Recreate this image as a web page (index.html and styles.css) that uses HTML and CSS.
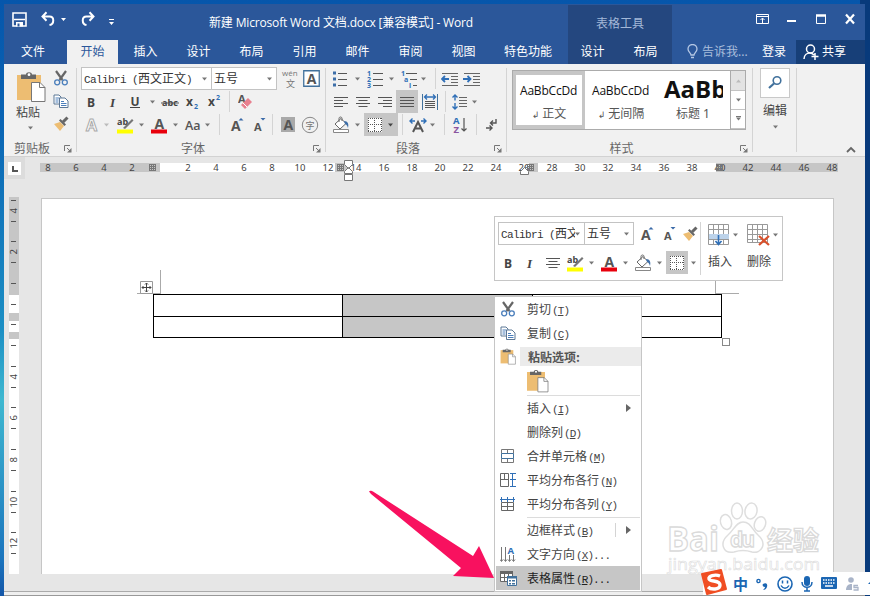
FILE: index.html
```html
<!DOCTYPE html>
<html lang="zh-CN">
<head>
<meta charset="utf-8">
<title>Word</title>
<link rel="stylesheet" href="styles.css">
</head>
<body>
<svg class="defs" width="0" height="0">
  <symbol id="dd" viewBox="0 0 5 4"><path d="M0 .5h5L2.5 3.5z" fill="currentColor"/></symbol>
  <symbol id="cut" viewBox="0 0 16 16"><path d="M3 1l6.500 9M13 1L6.500 10" stroke="#666" stroke-width="2.200" fill="none"/><circle cx="4.200" cy="12.300" r="2.500" fill="none" stroke="#4a7ebb" stroke-width="1.300"/><circle cx="11.800" cy="12.300" r="2.500" fill="none" stroke="#4a7ebb" stroke-width="1.300"/></symbol>
  <symbol id="copy" viewBox="0 0 16 16"><path d="M1 2h5l2 2v7H1z" fill="#fff" stroke="#5d7896"/><path d="M2.500 5h4M2.500 7h3M2.500 9h3" stroke="#4a7ebb"/><path d="M6.500 5h5.500l3 3v6.500H6.500z" fill="#fff" stroke="#5d7896"/><path d="M8 8.500h3M8 10.500h5.500M8 12.500h5.500" stroke="#4a7ebb"/></symbol>
  <symbol id="brush" viewBox="0 0 16 16"><path d="M1 8l6-2 4 4-4 5z" fill="#edbd72"/><path d="M6 4.500l5.500 5.500 1.500-1.500L7.500 3z" fill="#666"/><path d="M10 6l4.500-4.500" stroke="#666" stroke-width="3"/></symbol>
  <symbol id="paste" viewBox="0 0 30 32"><path d="M1 4h24v25H1z" fill="#edbd72"/><path d="M5 8V3.500h5C10 .5 16 .5 16 3.500h4V8z" fill="#666"/><circle cx="13" cy="3.700" r="1.400" fill="#fff"/><path d="M15.500 11.500H24l5 5v14H15.500z" fill="#fff" stroke="#777"/><path d="M23.500 11.500v5H29" fill="none" stroke="#777"/></symbol>
  <symbol id="launch" viewBox="0 0 8 8"><path d="M.5 6V.5H6M3 3l3 3" stroke="#777" fill="none"/><path d="M7.500 3v4.500H3z" fill="#777"/></symbol>
  <symbol id="bold" viewBox="0 0 12 16"><text x="2" y="12.500" class="gb">B</text></symbol>
  <symbol id="ital" viewBox="0 0 12 16"><text x="3" y="12.500" class="gi">I</text></symbol>
  <symbol id="und" viewBox="0 0 12 16"><text x="1.500" y="11.500" class="gb">U</text><path d="M1 13.500h10" stroke="#444"/></symbol>
  <symbol id="abc" viewBox="0 0 20 16"><text x="2" y="12" class="gs" textLength="16">abc</text><path d="M1 9h18" stroke="#555"/></symbol>
  <symbol id="sub" viewBox="0 0 14 16"><text x="1" y="12" class="gb">x</text><text x="9" y="15" class="gn">2</text></symbol>
  <symbol id="sup" viewBox="0 0 14 16"><text x="1" y="12" class="gb">x</text><text x="9" y="6" class="gn">2</text></symbol>
  <symbol id="eraser" viewBox="0 0 16 18"><text x="0" y="10" class="gm">A</text><path d="M3 12l7-7 4 4-7 7z" fill="#e8808f"/><path d="M5 10l4 4" stroke="#fff"/></symbol>
  <symbol id="outa" viewBox="0 0 14 16"><text x="1" y="14" class="go">A</text></symbol>
  <symbol id="hl" viewBox="0 0 18 18"><text x="1" y="9" class="gs">ab</text><path d="M7 12l9-9 1.500 1.500L9 13z" fill="#777"/><path d="M1 13.500h16v4H1z" fill="#ff0"/></symbol>
  <symbol id="reda" viewBox="0 0 18 18"><text x="4.500" y="12.500" class="ga">A</text><path d="M1 13.500h16v4H1z" fill="#e8000c"/></symbol>
  <symbol id="aa" viewBox="0 0 18 16"><text x="1" y="12.500" class="gl">Aa</text></symbol>
  <symbol id="grow" viewBox="0 0 14 18"><text x="1" y="15" class="ga">A</text><path d="M8.500 4.500L11 2l2.500 2.500z" fill="#3b6aa8"/></symbol>
  <symbol id="shrink" viewBox="0 0 14 18"><text x="2" y="15" class="gm">A</text><path d="M8.500 2h5L11 4.500z" fill="#3b6aa8"/></symbol>
  <symbol id="shade" viewBox="0 0 14 15"><path d="M0 0h14v15H0z" fill="#a9a9a9"/><text x="2.500" y="12.500" class="ga">A</text></symbol>
  <symbol id="circ" viewBox="0 0 18 18"><circle cx="9" cy="9" r="7.700" fill="none" stroke="#888"/><text x="4.500" y="12.500" class="zc">字</text></symbol>
  <symbol id="wen" viewBox="0 0 18 20"><text x="1" y="7" class="zp">wén</text><text x="5" y="18" class="zq">文</text></symbol>
  <symbol id="boxa" viewBox="0 0 17 17"><path d="M.75 .75h15.500v15.500H.75z" fill="#fff" stroke="#41719c" stroke-width="1.300"/><text x="3.800" y="13.500" class="ga">A</text></symbol>
  <symbol id="bul" viewBox="0 0 16 18"><path d="M1 3h3M1 9h3M1 15h3" stroke="#3d6ea8" stroke-width="3"/><path d="M6 3.500h9M6 9.500h9M6 15.500h9" stroke="#555"/></symbol>
  <symbol id="num" viewBox="0 0 16 18"><text x="0" y="5.500" class="gx">1</text><text x="0" y="11.500" class="gx">2</text><text x="0" y="17.500" class="gx">3</text><path d="M6 3.500h10M6 9.500h10M6 15.500h10" stroke="#555"/></symbol>
  <symbol id="mul" viewBox="0 0 18 18"><text x="1" y="5.500" class="gx">1</text><text x="4" y="11.500" class="gx">a</text><text x="9" y="17.500" class="gx">i</text><path d="M6 3.500h11M10 9.500h7M13 15.500h4" stroke="#555"/></symbol>
  <symbol id="outd" viewBox="0 0 18 16"><path d="M1 2.500h16M10 5.500h7M10 8.500h7M10 11.500h7M1 14.500h16" stroke="#666"/><path d="M1 8h7M4 5L1 8l3 3" stroke="#2f6fb7" stroke-width="1.800" fill="none"/></symbol>
  <symbol id="ind" viewBox="0 0 18 16"><path d="M1 2.500h16M10 5.500h7M10 8.500h7M10 11.500h7M1 14.500h16" stroke="#666"/><path d="M0 8h7M4.500 5l3 3-3 3" stroke="#2f6fb7" stroke-width="1.800" fill="none"/></symbol>
  <symbol id="al" viewBox="0 0 14 12"><path d="M0 1.500h14M0 4.500h9M0 7.500h14M0 10.500h9" stroke="#555"/></symbol>
  <symbol id="ac" viewBox="0 0 14 12"><path d="M0 1.500h14M2.500 4.500h9M0 7.500h14M2.500 10.500h9" stroke="#555"/></symbol>
  <symbol id="ar" viewBox="0 0 14 12"><path d="M0 1.500h14M5 4.500h9M0 7.500h14M5 10.500h9" stroke="#555"/></symbol>
  <symbol id="aj" viewBox="0 0 14 12"><path d="M0 1.500h14M0 4.500h14M0 7.500h14M0 10.500h14" stroke="#555"/></symbol>
  <symbol id="dist" viewBox="0 0 18 18"><path d="M1.500 1v16M16.500 1v16" stroke="#41719c"/><path d="M4 4h10M6 1.500L3.500 4 6 6.500M12 1.500L14.500 4 12 6.500" stroke="#2f6fb7" stroke-width="1.300" fill="none"/><path d="M4 8.500h10M4 10.500h10M4 12.500h10M4 14.500h10" stroke="#555"/></symbol>
  <symbol id="ls" viewBox="0 0 16 18"><path d="M3 2v5.500M3 10v6M.5 4.500L3 2l2.500 2.500M.5 13.500L3 16l2.500-2.500" stroke="#2f6fb7" stroke-width="1.400" fill="none"/><path d="M7 4.500h8M7 7.500h8M7 10.500h8M7 13.500h8" stroke="#666"/></symbol>
  <symbol id="bucket" viewBox="0 0 18 18"><path d="M3 8l6-5.500 5 5-6 5.500z" fill="#fff" stroke="#666"/><path d="M7 6V2.500c0-2 3-2 3 0V5" fill="none" stroke="#666"/><path d="M12 5c4 0 5 3 4 7-1-3-2-4-3-4z" fill="#3d6ea8"/><path d="M1.500 13.500h15v3h-15z" fill="#fff" stroke="#888"/></symbol>
  <symbol id="bord" viewBox="0 0 14 14"><path d="M0 0h14v14H0z" fill="#fff"/><path d="M0 .5h14M0 13.500h14M.5 0v14M13.500 0v14M0 6.500h14M6.500 0v14" fill="none" stroke="#555" stroke-dasharray="1 1"/></symbol>
  <symbol id="chs" viewBox="0 0 18 16"><path d="M4 15L9 5l5 10M6 11.500h6" fill="none" stroke="#555" stroke-width="2"/><path d="M1.500 4H6M3.500 1.500L1 4l2.500 2.500M12 4h5M14.500 1.500L17 4l-2.500 2.500" stroke="#2f6fb7" stroke-width="1.400" fill="none"/></symbol>
  <symbol id="az" viewBox="0 0 16 18"><text x="1" y="8" class="gz1">A</text><text x="1.500" y="17" class="gz2">Z</text><path d="M12 2v13M9.500 12.500L12 15l2.500-2.500" stroke="#555" fill="none" stroke-width="1.200"/></symbol>
  <symbol id="ret" viewBox="0 0 14 16"><path d="M11 2v4H6M8 3.500L5.500 6 8 8.500M1 11h6M4.500 8.500L7 11l-2.500 2.500" stroke="#555" stroke-width="1.400" fill="none"/></symbol>
</svg>

<div class="desktop">
 <div class="window">
  <header class="top">
    <div class="title">
      <svg class="qat" width="112" height="20" viewBox="0 0 112 20"><path d="M1 2h13v13H1z" fill="none" stroke="#fff" stroke-width="1.600"/><path d="M2 8.500h11" stroke="#fff" stroke-width="1.500"/><path d="M4 11h7v4.500H4z" fill="#fff"/><path d="M5.500 12.500h2v3h-2z" fill="#2b579a"/><path d="M31 5.500h6.500c5 0 5 7.500 0 8.500M34.500 1.300L30.500 5.500l4 4.200" fill="none" stroke="#fff" stroke-width="2"/><path d="M49 7h5l-2.500 3zM97 11h5l-2.500 3z" fill="#fff"/><path d="M81 5.500h-6.500c-5 0-5 7.500 0 8.500M77.500 1.300l4 4.200-4 4.200" fill="none" stroke="#fff" stroke-width="2"/><path d="M97 8.500h5" stroke="#fff"/></svg>
      <span class="name">新建 Microsoft Word 文档.docx [兼容模式] - Word</span>
    </div>
    <nav class="tabs">
      <span class="file">文件</span><span class="active"><b>开始</b></span><span>插入</span><span>设计</span><span>布局</span><span>引用</span><span>邮件</span><span>审阅</span><span>视图</span><span class="wide">特色功能</span>
    </nav>
    <div class="tools"><div class="toolname">表格工具</div><div class="tooltabs"><span>设计</span><span>布局</span></div></div>
    <div class="winctl"><svg width="102" height="16" viewBox="0 0 102 16"><path d="M.5 1.500h12v9H.5zM.5 3.500h12" fill="none" stroke="#fff"/><path d="M6.500 10V5M4.500 7l2-2 2 2" fill="none" stroke="#fff"/><path d="M31 8h9" stroke="#fff" stroke-width="2"/><path d="M60.500 2.500h9v8h-9z" fill="none" stroke="#fff"/><path d="M60 2.500h10" stroke="#fff" stroke-width="2.500"/><path d="M90 1.500l8 9M98 1.500l-8 9" stroke="#fff" stroke-width="2.200"/></svg></div>
    <div class="account">
      <svg width="12" height="16" viewBox="0 0 12 16"><path d="M4 11c0-2-3-3-3-6a4.500 4.500 0 0 1 9 0c0 3-3 4-3 6zM4 13.500h3" fill="none" stroke="#b4c7e4" stroke-width="1.300"/></svg>
      <span class="tell">告诉我...</span><span class="login">登录</span>
      <span class="share"><svg width="17" height="16" viewBox="0 0 17 16"><circle cx="7.500" cy="5" r="4" fill="none" stroke="#fff" stroke-width="1.500"/><path d="M1 15c0-4 3-6 6-6 2 0 3 1 4 2M8.500 12.500h7M12 9v7" fill="none" stroke="#fff" stroke-width="1.500"/></svg>共享</span>
    </div>
  </header>

  <section class="ribbon">
    <div class="group clip">
      <div class="clipbody">
        <div class="pastebtn"><svg width="30" height="32"><use href="#paste"/></svg><span>粘贴</span><svg class="dd" width="5" height="4"><use href="#dd"/></svg></div>
        <div class="clipcol"><svg width="16" height="16"><use href="#cut"/></svg><svg width="16" height="16"><use href="#copy"/></svg><svg width="16" height="16"><use href="#brush"/></svg></div>
      </div>
      <div class="label"><span>剪贴板</span><svg width="8" height="8"><use href="#launch"/></svg></div>
    </div>
    <div class="group font">
      <div class="row"><div class="combo c1"><span>Calibri (<b>西文正文</b>)</span><svg class="dd" width="5" height="4"><use href="#dd"/></svg></div><div class="combo c2"><span><b>五号</b></span><svg class="dd" width="5" height="4"><use href="#dd"/></svg></div><svg class="g4" width="18" height="20"><use href="#wen"/></svg><svg class="g4" width="17" height="17"><use href="#boxa"/></svg></div>
      <div class="row"><svg class="g4" width="12" height="16"><use href="#bold"/></svg><svg class="g10" width="12" height="16"><use href="#ital"/></svg><svg class="g10" width="12" height="16"><use href="#und"/></svg><svg class="g9 dd" width="5" height="4"><use href="#dd"/></svg><svg class="g5" width="20" height="16"><use href="#abc"/></svg><svg class="g5" width="14" height="16"><use href="#sub"/></svg><svg class="g8" width="14" height="16"><use href="#sup"/></svg><i class="sep g8"></i><svg class="g8" width="16" height="18"><use href="#eraser"/></svg></div>
      <div class="row"><svg class="g4" width="14" height="16"><use href="#outa"/></svg><svg class="g5 dd pale" width="5" height="4"><use href="#dd"/></svg><svg class="g7" width="18" height="18"><use href="#hl"/></svg><svg class="g5 dd" width="5" height="4"><use href="#dd"/></svg><svg class="g6" width="18" height="18"><use href="#reda"/></svg><svg class="g5 dd" width="5" height="4"><use href="#dd"/></svg><svg class="g6" width="18" height="16"><use href="#aa"/></svg><svg class="g3 dd" width="5" height="4"><use href="#dd"/></svg><i class="sep g9"></i><svg class="g10" width="14" height="18"><use href="#grow"/></svg><svg class="g8" width="14" height="18"><use href="#shrink"/></svg><i class="sep g6"></i><svg class="g8" width="14" height="15"><use href="#shade"/></svg><svg class="g6" width="18" height="18"><use href="#circ"/></svg></div>
      <div class="label"><span>字体</span><svg width="8" height="8"><use href="#launch"/></svg></div>
    </div>
    <div class="group para">
      <div class="row"><svg class="g6" width="16" height="18"><use href="#bul"/></svg><svg class="g7 dd" width="5" height="4"><use href="#dd"/></svg><svg class="g7" width="16" height="18"><use href="#num"/></svg><svg class="g6 dd" width="5" height="4"><use href="#dd"/></svg><svg class="g6" width="18" height="18"><use href="#mul"/></svg><svg class="g3 dd" width="5" height="4"><use href="#dd"/></svg><i class="sep g9"></i><svg class="g5" width="18" height="16"><use href="#outd"/></svg><svg class="g4" width="18" height="16"><use href="#ind"/></svg></div>
      <div class="row"><svg class="g8" width="14" height="12"><use href="#al"/></svg><svg class="g8" width="14" height="12"><use href="#ac"/></svg><svg class="g8" width="14" height="12"><use href="#ar"/></svg><span class="on g4"><svg width="14" height="12"><use href="#aj"/></svg></span><svg class="g3" width="18" height="18"><use href="#dist"/></svg><i class="sep g6"></i><svg class="g6" width="16" height="18"><use href="#ls"/></svg><svg class="g4 dd" width="5" height="4"><use href="#dd"/></svg></div>
      <div class="row"><svg class="g6" width="18" height="18"><use href="#bucket"/></svg><svg class="g5 dd" width="5" height="4"><use href="#dd"/></svg><span class="on split g4"><svg width="14" height="14"><use href="#bord"/></svg><svg class="dd" width="5" height="4"><use href="#dd"/></svg></span><i class="sep g4"></i><svg class="g6" width="18" height="16"><use href="#chs"/></svg><svg class="g3 dd" width="5" height="4"><use href="#dd"/></svg><i class="sep g9"></i><svg class="g7" width="16" height="18"><use href="#az"/></svg><i class="sep g8"></i><svg class="g8" width="14" height="16"><use href="#ret"/></svg></div>
      <div class="label"><span>段落</span><svg width="8" height="8"><use href="#launch"/></svg></div>
    </div>
    <div class="group styles">
      <div class="gallery">
        <div class="style sel"><span class="sample">AaBbCcDd</span><span class="sname"><small>↲</small> 正文</span></div>
        <div class="style"><span class="sample">AaBbCcDd</span><span class="sname"><small>↲</small> 无间隔</span></div>
        <div class="style"><span class="sample big">AaBb</span><span class="sname">标题 1</span></div>
        <div class="scroll"><span class="off"><svg class="dd up" width="5" height="4"><use href="#dd"/></svg></span><span><svg class="dd" width="5" height="4"><use href="#dd"/></svg></span><span class="more"><svg class="dd" width="5" height="4"><use href="#dd"/></svg></span></div>
      </div>
      <div class="label"><span>样式</span><svg width="8" height="8"><use href="#launch"/></svg></div>
    </div>
    <div class="group edit">
      <div class="findbox"><svg width="16" height="16" viewBox="0 0 16 16"><circle cx="10" cy="5.500" r="3.800" fill="none" stroke="#41719c" stroke-width="1.600"/><path d="M7 8.500L2 13" stroke="#41719c" stroke-width="2.200"/></svg></div>
      <span>编辑</span><svg class="dd" width="5" height="4"><use href="#dd"/></svg>
    </div>
    <div class="collapse"><svg width="10" height="7" viewBox="0 0 10 7"><path d="M1 6l4-4 4 4" fill="none" stroke="#666" stroke-width="1.800"/></svg></div>
  </section>

  <section class="hruler">
    <div class="tabsel"><svg width="13" height="13" viewBox="0 0 13 13"><path d="M0 0h13v13H0z" fill="#fff"/><path d="M5 4v5h5" fill="none" stroke="#555" stroke-width="2"/></svg></div>
    <div class="scale"><b>8</b><b>6</b><b>4</b><b>2</b><b></b><b>2</b><b>4</b><b>6</b><b>8</b><b>10</b><b>12</b><b>14</b><b>16</b><b>18</b><b>20</b><b>22</b><b>24</b><b>26</b><b>28</b><b>30</b><b>32</b><b>34</b><b>36</b><b>38</b><b>40</b><b>42</b><b>44</b><b>46</b><b>48</b></div>
    <i class="mesh m1"></i><i class="mesh m2"></i><i class="mesh m3"></i><i class="mesh m4"></i>
    <svg class="marker mk1" width="10" height="22" viewBox="0 0 10 22"><path d="M.5 .5h8v4l-4 4-4-4zM.5 13.500v-2l4-4 4 4v2zM.5 14.500h8v6h-8z" fill="#fff" stroke="#777"/></svg>
    <svg class="marker mk2" width="10" height="8" viewBox="0 0 10 8"><path d="M.5 7.500v-3l4-4 4 4v3z" fill="#fff" stroke="#777"/></svg>
  </section>

  <main class="work">
    <div class="vruler"><b>4</b><b>2</b><b></b><b></b><b>4</b><b>6</b><b>8</b><b>10</b><b>12</b></div>
    <div class="page">
      <div class="tablewrap">
        <table><tr><td></td><td class="picked"></td><td></td></tr><tr><td></td><td class="picked"></td><td></td></tr></table>
        <i class="crop left"></i><i class="crop right"></i>
        <svg class="move" width="13" height="13" viewBox="0 0 13 13"><path d="M.5 .5h12v12H.5z" fill="#fff" stroke="#999"/><path d="M6.500 2v9M2 6.500h9M5 3.500L6.500 2 8 3.500M5 9.500L6.500 11 8 9.500M3.500 5L2 6.500 3.500 8M9.500 5L11 6.500 9.500 8" fill="none" stroke="#444"/></svg>
        <i class="resize"></i>
      </div>
    </div>
  </main>
 </div>

 <svg class="watermark" width="170" height="84" viewBox="0 0 170 84"><g fill="#fff" stroke="#dedede" stroke-width="1.500"><ellipse cx="60" cy="23" rx="5.500" ry="7.500" transform="rotate(-15 60 23)"/><ellipse cx="71" cy="12" rx="5.500" ry="8"/><ellipse cx="85" cy="12" rx="6" ry="8" transform="rotate(10 85 12)"/><ellipse cx="94" cy="25" rx="5.500" ry="7.500" transform="rotate(20 94 25)"/><path d="M77 23c8 0 9 8 15 13 10 9 3 19-6 17-6-2-12-2-18 0-11 2-15-9-6-17 6-5 8-13 15-13z"/></g><g class="wtext"><text x="1" y="52" class="wb" textLength="52" lengthAdjust="spacingAndGlyphs">Bai</text><text x="64" y="48" class="wd" textLength="25">du</text><text x="101" y="51" class="wz" textLength="52">经验</text></g><text x="2" y="71" class="wu" textLength="152" lengthAdjust="spacingAndGlyphs">jingyan.baidu.com</text></svg>

 <div class="mini">
  <div class="minileft">
   <div class="row"><div class="combo m1c"><span>Calibri (<b>西文正文</b>)</span><svg class="dd" width="5" height="4"><use href="#dd"/></svg></div><div class="combo m2c"><span><b>五号</b></span><svg class="dd" width="5" height="4"><use href="#dd"/></svg></div><svg class="g6" width="14" height="18"><use href="#grow"/></svg><svg class="g8" width="14" height="18"><use href="#shrink"/></svg><svg class="g6" width="16" height="16"><use href="#brush"/></svg></div>
   <div class="row"><svg class="g4" width="12" height="16"><use href="#bold"/></svg><svg class="g10" width="12" height="16"><use href="#ital"/></svg><svg class="g10" width="14" height="12"><use href="#ac"/></svg><svg class="g6" width="18" height="18"><use href="#hl"/></svg><svg class="g5 dd" width="5" height="4"><use href="#dd"/></svg><svg class="g6" width="18" height="18"><use href="#reda"/></svg><svg class="g5 dd" width="5" height="4"><use href="#dd"/></svg><svg class="g6" width="18" height="18"><use href="#bucket"/></svg><svg class="g5 dd" width="5" height="4"><use href="#dd"/></svg><span class="on g4"><svg width="14" height="14"><use href="#bord"/></svg></span><svg class="g3 dd" width="5" height="4"><use href="#dd"/></svg></div>
  </div>
  <div class="miniright">
   <div class="big1"><div><svg width="22" height="22" viewBox="0 0 22 22"><path d="M.5 .5h20v20H.5zM.5 5.500h20M.5 15.500h20M5.500 .5v20M10.500 .5v20M15.500 .5v20" fill="#fff" stroke="#999"/><path d="M1 10h20v5H1z" fill="#bdd3ea"/><path d="M10.500 11v9M7.500 17l3 3.500 3-3.500" fill="none" stroke="#2f6fb7" stroke-width="1.600"/></svg><svg class="dd" width="5" height="4"><use href="#dd"/></svg></div><span>插入</span></div>
   <div class="big1"><div><svg width="23" height="22" viewBox="0 0 23 22"><path d="M.5 .5h20v18H.5zM.5 5.500h20M.5 10.500h20M.5 15.500h20M5.500 .5v18M10.500 .5v18M15.500 .5v18" fill="#fff" stroke="#999"/><path d="M12 12l10 9M22 12l-10 9" stroke="#d9512c" stroke-width="2.200"/></svg><svg class="dd" width="5" height="4"><use href="#dd"/></svg></div><span>删除</span></div>
  </div>
 </div>

 <div class="menu">
  <div class="item"><svg width="16" height="16"><use href="#cut"/></svg><span>剪切<em>(<u>T</u>)</em></span></div>
  <div class="item"><svg width="16" height="16"><use href="#copy"/></svg><span>复制<em>(<u>C</u>)</em></span></div>
  <div class="head"><svg width="16" height="17"><use href="#paste"/></svg><span>粘贴选项:</span></div>
  <div class="pasteopt"><svg width="23" height="24"><use href="#paste"/></svg></div>
  <hr>
  <div class="item"><i></i><span>插入<em>(<u>I</u>)</em></span><svg class="sub" width="5" height="8" viewBox="0 0 5 8"><path d="M0 0l5 4-5 4z" fill="#666"/></svg></div>
  <div class="item"><i></i><span>删除列<em>(<u>D</u>)</em></span></div>
  <div class="item"><svg width="16" height="16" viewBox="0 0 16 16"><path d="M1.500 5.500v-4h12v4M7.500 1v4M1.500 10.500v4h12v-4M7.500 10v5" fill="none" stroke="#777"/><path d="M1.500 5.500h12v5h-12z" fill="none" stroke="#41719c"/></svg><span>合并单元格<em>(<u>M</u>)</em></span></div>
  <div class="item"><svg width="16" height="16" viewBox="0 0 16 16"><path d="M.5 1.500h8v13h-8zM.5 7.500h8M4.500 1v6" fill="none" stroke="#666"/><path d="M12.500 1v14M10 1.500h6M10 7.500h6M10 14.500h6" stroke="#2f6fb7" fill="none"/></svg><span>平均分布各行<em>(<u>N</u>)</em></span></div>
  <div class="item"><svg width="16" height="16" viewBox="0 0 16 16"><path d="M1.500 6.500h12v8h-12zM1.500 10.500h12M7.500 6.500v8" fill="none" stroke="#666"/><path d="M0 3.500h15M1.500 1v5M7.500 1v5M13.500 1v5" stroke="#2f6fb7"/></svg><span>平均分布各列<em>(<u>Y</u>)</em></span></div>
  <hr class="second">
  <div class="item"><i></i><span>边框样式<em>(<u>B</u>)</em></span><svg class="sub bar" width="5" height="8" viewBox="0 0 5 8"><path d="M0 0l5 4-5 4z" fill="#666"/></svg></div>
  <div class="item"><svg width="16" height="18" viewBox="0 0 16 18"><path d="M1.500 2v14M5.500 2v14M9.500 10v6M13.500 10v6M0 14.500l1.500 2 1.500-2M4 14.500l1.500 2 1.500-2M8 14.500l1.500 2 1.500-2M12 14.500l1.500 2 1.500-2" fill="none" stroke="#777"/><text x="7.500" y="9" class="gz1">A</text></svg><span>文字方向<em>(<u>X</u>)...</em></span></div>
  <div class="item hot"><svg width="17" height="17" viewBox="0 0 17 17"><path d="M.5 1.500h12v10H.5zM.5 7.500h12M4.500 4v8M8.500 4v8" fill="#fff" stroke="#666"/><path d="M0 1h13v3H0z" fill="#666"/><path d="M7.500 6.500h9v9h-9z" fill="#fff" stroke="#41719c"/><path d="M7 6h10v2.500H7zM9 10h2v1.500H9zM12 10h3v1.500h-3zM9 13h2v1.500H9zM12 13h3v1.500h-3z" fill="#41719c"/></svg><span>表格属性<em>(<u>R</u>)...</em></span></div>
 </div>

 <svg class="pointer" width="130" height="92" viewBox="0 0 130 92"><path d="M1 1.500C2 0 4 1 5 1.500L105 66l6-10 15 32-41-2 8-8L3 4z" fill="#f8115f"/></svg>

 <div class="ime">
  <svg class="sogou" width="28" height="28" viewBox="0 0 28 28"><path d="M2 6l19-4 5 19-19 5z" fill="#f04e23" stroke="#f04e23" stroke-width="2" stroke-linejoin="round"/><path d="M20 8c-5-2-12 0-11 3s11 1 11 6-9 5-12 2" fill="none" stroke="#fff" stroke-width="3.400"/></svg>
  <b>中</b>
  <svg width="13" height="14" viewBox="0 0 13 14"><circle cx="2.500" cy="4" r="1.600" fill="none" stroke="#1b66b3" stroke-width="1.400"/><path d="M7 7c3-2 5 0 4 3-.7 2-2 3-4 3 1-1 2-2 2-3-2 0-3-2-2-3z" fill="#1b66b3"/></svg>
  <svg width="16" height="16" viewBox="0 0 16 16"><circle cx="8" cy="8" r="7" fill="none" stroke="#1b66b3" stroke-width="1.600"/><path d="M5.500 4.500v3M10.500 4.500v3M4 9.500c2 3.500 6 3.500 8 0" fill="none" stroke="#1b66b3" stroke-width="1.500"/></svg>
  <svg width="12" height="16" viewBox="0 0 12 16"><rect x="3" y="0" width="6" height="10" rx="3" fill="#1b66b3"/><path d="M1 6c0 7 10 7 10 0M6 11v4M3 15h6" fill="none" stroke="#1b66b3" stroke-width="1.500"/></svg>
  <svg width="16" height="13" viewBox="0 0 16 13"><rect width="16" height="12" rx="1" fill="#1b66b3"/><path d="M2 3h12M2 6h12" stroke="#fff" stroke-width="1.500" stroke-dasharray="1.500 1"/><path d="M4 9h8" stroke="#fff" stroke-width="1.500"/></svg>
  <svg width="15" height="16" viewBox="0 0 15 16"><circle cx="6" cy="4" r="2.800" fill="#a9b4c8"/><path d="M1 14c0-8 10-8 10 0z" fill="#a9b4c8"/><path d="M7 8h7v7H7z" fill="#fff"/><path d="M13 9.500H9v2h4v2.500H8.500" fill="none" stroke="#a9b4c8" stroke-width="1.300"/></svg>
  <svg width="8" height="14" viewBox="0 0 8 14"><path d="M0 7l5-5 3 3v8H3V7z" fill="#1b66b3"/></svg>
 </div>
</div>
</body>
</html>
```
FILE: styles.css
```css
* { box-sizing: border-box; }
body { margin: 0; font: 12px/16px "Noto Sans", "Noto Sans CJK SC", sans-serif; color: #444; }
svg { flex: none; display: block; }
i, em { font-style: normal; }
b { font-weight: normal; }
.defs { display: none; }
.desktop { position: relative; width: 870px; height: 596px; overflow: hidden; padding: 4px 5px 0 4px; background: linear-gradient(90deg, transparent 860px, #083a7b 860px), linear-gradient(#0656ab, #0a64b4 120px, #1c8fc4 330px, #3fb8d0 400px, #1b74bd 560px, #1456a8); }
.window { width: 861px; height: 592px; background: #efefef; border-bottom: 1px solid #999; }

/* glyph icons */
.gb { font: bold 12px "Open Sans"; fill: #444; }
.gi { font: italic bold 13px "Liberation Serif"; fill: #444; }
.gs { font: bold 9px "Open Sans"; fill: #444; }
.gn { font: bold 7px "Open Sans"; fill: #2f6fb7; }
.gx { font: bold 7px "Open Sans"; fill: #2f6fb7; }
.gm { font: bold 11px "Open Sans"; fill: #555; }
.ga { font: bold 14px "Open Sans"; fill: #555; }
.go { font: bold 16px "Open Sans"; fill: #fff; stroke: #aaa; }
.gl { font: 600 12.5px "Open Sans"; fill: #555; }
.gz1 { font: bold 9.500px "Open Sans"; fill: #2f6fb7; }
.gz2 { font: bold 9.500px "Open Sans"; fill: #8a55a0; }
.zc { font: 9px "Noto Sans CJK SC"; fill: #777; }
.zp { font: 8px "Open Sans"; fill: #777; }
.zq { font: 9px "Noto Sans CJK SC"; fill: #777; }

/* title and tabs */
.top { display: grid; grid-template: 36px 24px / 564px 104px 193px; background: #2b579a; color: #fff; }
.title { display: flex; padding: 7px 0 0 8px; }
.name { margin: 4px 0 0 85px; font-family: "Open Sans", "Noto Sans CJK SC", sans-serif; letter-spacing: -.16px; white-space: nowrap; }
.tabs { grid-row: 2; grid-column: 1; display: flex; line-height: 24px; }
.tabs span { width: 53px; text-align: center; }
.tabs .file { width: 58px; margin-right: 4px; }
.tabs .active { padding: 0 1px; }
.tabs .active b { display: block; background: #f1f1f1; color: #2b579a; }
.tabs .wide { width: 76px; }
.tools { grid-row: 1 / 3; grid-column: 2; margin-top: 1px; background: #24477f; }
.toolname { height: 35px; line-height: 37px; text-align: center; color: #a3b8d8; }
.tooltabs { display: flex; line-height: 24px; margin-left: -2px; }
.tooltabs span { width: 53px; text-align: center; }
.winctl { padding: 9px 0 0 84px; }
.account { display: flex; align-items: center; padding-left: 15px; }
.tell { width: 55px; margin-left: 3px; color: #a9bddb; white-space: nowrap; }
.login { margin-left: 5px; }
.share { display: flex; gap: 2px; align-items: center; margin-left: auto; width: 69px; height: 24px; padding-left: 7px; background: #173f78; }

/* ribbon */
.ribbon { display: flex; height: 93px; background: #f1f1f1; border-bottom: 1px solid #d2d2d2; }
.group { position: relative; display: flex; flex-direction: column; padding-top: 3px; }
.group::after { content: ""; width: 1px; background: #d4d4d4; position: absolute; right: 0; top: 4px; height: 84px; }
.label { display: flex; align-items: center; margin-top: auto; height: 15px; color: #666; padding-right: 5px; }
.label span { flex: 1; text-align: center; padding-right: 4px; }
.clip { width: 73px; }
.font { width: 249px; }
.para { width: 181px; }
.styles { width: 246px; }
.edit { width: 44px; align-items: center; }
.row { display: flex; align-items: center; height: 23px; }
.font .row { padding-left: 4px; }
.dd { color: #777; }
.pale { color: #bbb; }
.g3 { margin-left: 3px; } .g4 { margin-left: 4px; } .g5 { margin-left: 5px; } .g6 { margin-left: 6px; }
.g7 { margin-left: 7px; } .g8 { margin-left: 8px; } .g9 { margin-left: 9px; } .g10 { margin-left: 10px; }
.sep { width: 1px; height: 21px; background: #d4d4d4; }
.clipbody { display: flex; padding-left: 12px; }
.pastebtn { width: 30px; padding-top: 4px; display: flex; flex-direction: column; }
.pastebtn span { margin: 2px 0 5px; }
.pastebtn .dd { margin-left: 12px; }
.clipcol { display: flex; flex-direction: column; gap: 7px; margin-left: 7px; padding-top: 3px; }
.combo { display: flex; align-items: center; height: 23px; padding: 0 4px 0 2px; background: #fff; border: 1px solid #c3c3c3; color: #333; }
.combo span { flex: 1; overflow: hidden; white-space: nowrap; font: 11px/20px "Liberation Mono", monospace; letter-spacing: -.6px; }
.combo b { font: 12px/20px "Noto Sans CJK SC", sans-serif; letter-spacing: 0; }
.combo + .combo { border-left: 0; }
.c1 { width: 131px; } .c2 { width: 65px; }
.on { display: flex; align-items: center; justify-content: center; width: 22px; height: 23px; background: #c6c6c6; }
.on.split { width: 34px; justify-content: space-between; padding: 0 5px 0 4px; }
.on .dd { color: #444; }
.gallery { display: flex; width: 234px; height: 60px; margin: 3px 0 0 5px; border: 1px solid #ababab; background: #fff; }
.style { width: 72px; overflow: hidden; display: flex; flex-direction: column; align-items: center; border: 4px solid transparent; border-width: 4px 3px; }
.style.sel { border-color: #c6c6c6; }
.sample { width: 60px; height: 29px; line-height: 31px; padding-left: 1px; font-family: "Open Sans"; font-size: 12px; letter-spacing: -.2px; color: #111; white-space: nowrap; overflow: hidden; }
.sample.big { font: bold 24px/28px "Open Sans"; letter-spacing: 0; }
.sname { line-height: 22px; padding-top: 1px; white-space: nowrap; color: #555; }
.sname small { font: 9px "DejaVu Sans"; }
.scroll { margin-left: auto; width: 15px; border-left: 1px solid #ababab; display: grid; grid-template-rows: 20px 19px 19px; }
.scroll span { display: flex; align-items: center; justify-content: center; border-bottom: 1px solid #c3c3c3; }
.scroll .off { background: #e3e3e3; }
.up { transform: scaleY(-1); color: #bbb; }
.more::before { content: ""; width: 5px; height: 1px; background: #777; margin: -6px -5px 0 0; }
.findbox { display: flex; justify-content: center; align-items: center; width: 30px; height: 30px; margin: 1px 0 5px; background: #fff; border: 1px solid #c9c9c9; }
.edit > .dd { margin-top: 6px; }
.collapse { flex: 1; padding: 82px 0 0 49px; }

/* rulers */
.hruler { position: relative; display: flex; height: 23px; background: #e6e6e6; }
.tabsel { width: 21px; height: 22px; padding: 5px 4px; background: #dcdcdc; }
.scale { display: grid; grid-template-columns: repeat(29, 28px); width: 812px; height: 9px; margin: 6px 0 0 9px; font-size: 9.500px; line-height: 9px; text-align: center; font-family: "Noto Sans"; background: linear-gradient(90deg, transparent 6px, #c6c6c6 6px 126px, #fff 126px 301px, #c6c6c6 301px 314px, #fff 314px 495px, #c6c6c6 495px 504px, #fff 504px 682px, #c6c6c6 682px 804px, transparent 804px); }
.mesh { position: absolute; top: 7px; width: 7px; height: 7px; background: repeating-linear-gradient(90deg, #777 0 1px, transparent 1px 2px), repeating-linear-gradient(#777 0 1px, transparent 1px 2px); }
.m1 { left: 145px; } .m2 { left: 333px; } .m3 { left: 523px; } .m4 { left: 712px; }
.marker { position: absolute; }
.mk1 { left: 340px; top: 3px; } .mk2 { left: 516px; top: 10px; }
.work { display: flex; height: 412px; border-bottom: 1px solid #aaa; background: #e6e6e6; }
.vruler { width: 10px; height: 377px; margin: 17px 0 0 5px; overflow: hidden; display: flex; flex-direction: column; background: linear-gradient(#c6c6c6 98px, #fff 98px 116px, #c6c6c6 116px 124px, #fff 124px 135px, #c6c6c6 135px 142px, #fff 142px); }
.vruler b { flex: none; height: 41.600px; width: 10px; writing-mode: vertical-rl; transform: rotate(180deg); text-align: center; font-size: 9.500px; line-height: 10px; background: linear-gradient(transparent 10px, #555 10px 11px, transparent 11px 31px, #555 31px 32px, transparent 32px) 3px 0 / 5px 100% no-repeat; }
.vruler b:first-child { margin-top: -7.500px; }
.page { width: 793px; height: 376px; margin: 18px 0 0 22px; border: 1px solid #c6c6c6; border-bottom: 0; background: #fff; padding: 95px 0 0 111px; }
.tablewrap { position: relative; width: 569px; height: 44px; }
table { border-collapse: collapse; width: 569px; height: 44px; table-layout: fixed; }
td { border: 1px solid #000; padding: 0; height: 21px; }
.picked { background: #c6c6c6; }
.crop { position: absolute; width: 24px; border-bottom: 1px solid #aaa; }
.crop.left { left: -16px; top: -24px; height: 24px; border-right: 1px solid #aaa; }
.crop.right { left: 562px; top: -13px; height: 13px; border-left: 1px solid #aaa; }
.move { position: absolute; left: -13px; top: -13px; }
.resize { position: absolute; left: 569px; top: 44px; width: 8px; height: 8px; border: 1px solid #888; background: #fff; }

/* floating toolbar */
.mini { position: absolute; left: 494px; top: 216px; width: 289px; height: 65px; display: flex; padding: 5px 3px; background: #fff; border: 1px solid #c6c6c6; }
.minileft { width: 203px; border-right: 1px solid #d4d4d4; display: flex; flex-direction: column; gap: 6px; }
.m1c { width: 87px; } .m2c { width: 49px; }
.miniright { display: flex; padding: 2px 0 0 7px; gap: 11px; }
.big1 { width: 28px; display: flex; flex-direction: column; gap: 8px; }
.big1 div { display: flex; gap: 3px; align-items: center; }
.big1 span { white-space: nowrap; }

/* context menu */
.menu { position: absolute; left: 494px; top: 296px; width: 148px; height: 296px; background: #fff; border: 1px solid #c6c6c6; font-family: "Noto Sans CJK SC", sans-serif; }
.item, .head { display: grid; grid-template-columns: 19px 1fr auto; align-items: center; height: 24px; padding-left: 5px; }
.item { padding: 0 9px 0 4px; margin: 0 1px; }
.item span { padding-left: 8px; white-space: nowrap; }
.item em { font: 11px "Liberation Mono", monospace; letter-spacing: -.9px; margin-left: 1px; }
.head { height: 22px; }
.head span { margin-left: 1px; padding-left: 8px; height: 19px; line-height: 19px; background: #ebebeb; font-weight: bold; color: #555; }
.pasteopt { padding: 2px 0 0 31px; height: 28px; }
hr { border: 0; height: 1px; background: #dcdcdc; margin: 0 1px 0 32px; }
hr.second { margin-top: 1px; }
.sub { align-self: center; }
.bar { width: 16px; height: 14px; padding: 3px 0 3px 10px; border-left: 1px solid #d4d4d4; }
.hot { background: #c6c6c6; color: #222; }
.pointer { position: absolute; left: 368px; top: 490px; }

/* watermark */
.watermark { position: absolute; left: 666px; top: 499px; }
.wtext { fill: #fff; stroke: #dadada; stroke-width: 1.300px; }
.wb { font: bold 34px "Open Sans"; }
.wd { font: bold 21px "Open Sans"; }
.wz { font: bold 26px "Noto Sans CJK SC"; }
.wu { font: 17px "Open Sans"; fill: #fff; stroke: #ddd; stroke-width: .6px; }

/* input method bar */
.ime { position: absolute; left: 703px; top: 572px; width: 167px; height: 23px; display: flex; align-items: center; gap: 8px; background: #fff; overflow: visible; color: #1b66b3; }
.sogou { margin: -4px -3px 0 -3px; }
.ime b { font-size: 15px; font-weight: bold; width: 15px; }
```
